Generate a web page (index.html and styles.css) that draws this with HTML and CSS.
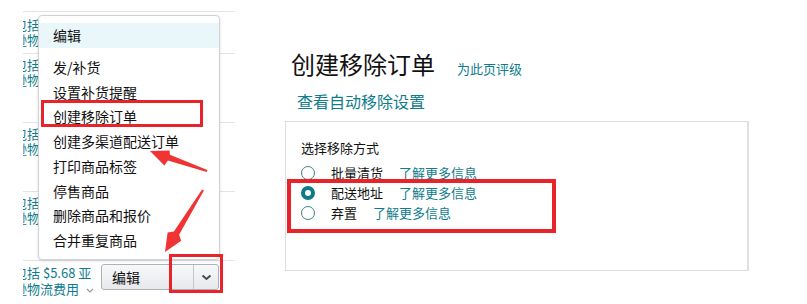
FILE: index.html
```html
<!DOCTYPE html>
<html lang="zh-CN">
<head>
<meta charset="utf-8">
<title>创建移除订单</title>
<link rel="stylesheet" href="styles.css">
</head>
<body>
<div class="page">
  <aside class="left">
    <div class="list">
      <div class="row row-first"><div class="row-text"><span class="ln">包括</span><span class="ln">逊物</span></div></div>
      <div class="row"><div class="row-text"><span class="ln">包括</span><span class="ln">逊物</span></div></div>
      <div class="row"><div class="row-text"><span class="ln">包括</span><span class="ln">逊物</span></div></div>
      <div class="row"><div class="row-text"><span class="ln">包括</span><span class="ln">逊物</span></div></div>
      <div class="row row-last">
        <div class="row-text"><span class="ln">包括 $5.68 亚</span><span class="ln">逊物流费用 <svg class="mini-chev" width="8" height="5" viewBox="0 0 8 5"><path d="M1 1 L4 4 L7 1" fill="none" stroke="#999" stroke-width="1.2"/></svg></span></div>
        <div class="split-btn">
          <span class="split-main">编辑</span>
          <span class="split-arrow"><svg width="11" height="7" viewBox="0 0 11 7"><path d="M1.5 1.5 L5.5 5 L9.5 1.5" fill="none" stroke="#4a4a4a" stroke-width="2"/></svg></span>
        </div>
      </div>
    </div>
    <ul class="menu">
      <li class="menu-item active">编辑</li>
      <li class="menu-item first-group">发/补货</li>
      <li class="menu-item">设置补货提醒</li>
      <li class="menu-item">创建移除订单</li>
      <li class="menu-item">创建多渠道配送订单</li>
      <li class="menu-item">打印商品标签</li>
      <li class="menu-item">停售商品</li>
      <li class="menu-item">删除商品和报价</li>
      <li class="menu-item">合并重复商品</li>
    </ul>
  </aside>
  <main class="main">
    <div class="title-row">
      <h1 class="title">创建移除订单</h1>
      <a class="rate-link">为此页评级</a>
    </div>
    <a class="auto-link">查看自动移除设置</a>
    <section class="panel">
      <div class="panel-heading">选择移除方式</div>
      <div class="option"><span class="radio"></span><span class="opt-label">批量清货</span><a class="more">了解更多信息</a></div>
      <div class="option"><span class="radio checked"></span><span class="opt-label">配送地址</span><a class="more">了解更多信息</a></div>
      <div class="option"><span class="radio"></span><span class="opt-label">弃置</span><a class="more">了解更多信息</a></div>
    </section>
  </main>
  <svg class="annot" width="807" height="304" viewBox="0 0 807 304">
    <rect x="42.5" y="101.5" width="159" height="24" fill="none" stroke="#e8242a" stroke-width="3"/>
    <rect x="170.5" y="255.5" width="51" height="36" fill="none" stroke="#e8242a" stroke-width="3"/>
    <rect x="289" y="181" width="265" height="50" fill="none" stroke="#e8242a" stroke-width="4"/>
    <polygon points="150,151 169.6,150.4 169.9,154.8 207.3,170 206.7,172 167.9,160.4 164.4,165.5" fill="#f03434"/>
    <polygon points="165,252 167.6,232.4 173.9,231.6 202.1,189.5 203.9,190.5 179.1,234.8 181.2,240.8" fill="#f03434"/>
  </svg>
</div>
</body>
</html>
```
FILE: styles.css
```css
* { box-sizing: border-box; }
html, body { margin: 0; padding: 0; background: #fff; }
body {
  font-family: "Noto Sans CJK SC", "Noto Sans", sans-serif;
  color: #111;
  width: 807px;
  height: 304px;
  overflow: hidden;
}
.page {
  position: relative;
  display: flex;
  width: 807px;
  height: 304px;
  overflow: hidden;
}
.left {
  position: relative;
  width: 285px;
  flex: none;
  padding-top: 11px;
}
.list {
  margin-left: 23px;
  width: 212px;
  overflow: hidden;
}
.row {
  height: 69px;
  border-top: 1px solid #e3e3e3;
  padding-top: 3px;
  font-size: 13px;
  line-height: 15px;
  color: #0f7c8c;
}
.row-first { height: 42px; padding-top: 5px; }
.row-last {
  display: flex;
  align-items: flex-start;
  height: 40px;
  padding-top: 4px;
  line-height: 16px;
}
.row-text {
  margin-left: -9px;
  width: 87px;
  flex: none;
  white-space: nowrap;
}
.ln { display: block; }
.mini-chev { margin-left: 4px; vertical-align: middle; }
.split-btn {
  display: flex;
  margin-top: -1px;
  width: 118px;
  height: 26px;
  border: 1px solid #adb1b8;
  border-radius: 3px;
  background: linear-gradient(#f7f8fa, #e7e9ec);
  color: #111;
  font-size: 14px;
  line-height: 24px;
}
.split-main {
  flex: 1;
  padding-left: 10px;
  border-right: 1px solid #c4c7cc;
}
.split-arrow {
  width: 24px;
  display: flex;
  align-items: center;
  justify-content: center;
}
.menu {
  position: absolute;
  left: 38px;
  top: 15px;
  width: 182px;
  height: 245px;
  margin: 0;
  padding: 7px 0 0;
  list-style: none;
  background: #fff;
  border: 1px solid #cfd2d6;
  border-radius: 4px;
  box-shadow: 0 1px 3px rgba(0,0,0,0.12);
}
.menu-item {
  padding-left: 14px;
  font-size: 14px;
  line-height: 24.7px;
  color: #111;
}
.menu-item.active {
  background: #e9f7fb;
  line-height: 25px;
}
.menu-item.first-group { margin-top: 7px; }
.main {
  flex: 1;
  padding-top: 49px;
}
.title-row {
  display: flex;
  align-items: baseline;
  margin-left: 6px;
}
.title {
  margin: 0;
  font-size: 24px;
  line-height: 30px;
  font-weight: normal;
  color: #111;
}
.rate-link {
  margin-left: 22px;
  font-size: 13px;
  color: #0f7c8c;
}
.auto-link {
  display: block;
  margin: 12px 0 0 12px;
  font-size: 16px;
  line-height: 20px;
  color: #0f7c8c;
}
.panel {
  margin-top: 10px;
  width: 464px;
  height: 150px;
  border: 1px solid #dddddd;
  border-right: 2px solid #e0e0e0;
  padding: 17px 0 0 15px;
}
.panel-heading {
  font-size: 13px;
  line-height: 18px;
  color: #111;
  margin-bottom: 6px;
}
.option {
  display: flex;
  align-items: center;
  height: 20px;
  font-size: 13px;
  line-height: 20px;
}
.radio {
  width: 14px;
  height: 14px;
  border-radius: 50%;
  border: 1px solid #3f7f89;
  background: #fff;
  margin-right: 16px;
  flex: none;
}
.radio.checked {
  border: 4.5px solid #0d7a8a;
}
.opt-label { color: #111; }
.more {
  margin-left: 16px;
  color: #0f7c8c;
}
.annot {
  position: absolute;
  left: 0;
  top: 0;
  pointer-events: none;
}
```
